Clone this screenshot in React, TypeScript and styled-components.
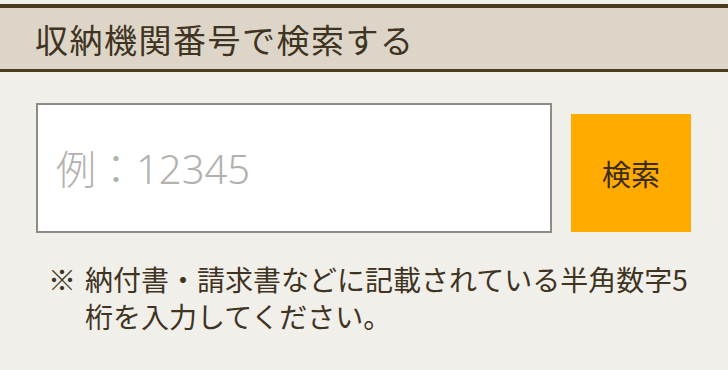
import { FC } from 'react'
import styled, { createGlobalStyle } from 'styled-components'

const GlobalStyle = createGlobalStyle`
    html, body {
        margin: 0;
        padding: 0;
        background: #f1efea;
    }
    body {
        font-family: "Noto Sans CJK JP", "Noto Sans", sans-serif;
        color: #3f3322;
    }
`

const Page = styled.div`
    width: 728px;
    height: 370px;
    padding-top: 4px;
    box-sizing: border-box;
    overflow: hidden;
`

const SectionHead = styled.h2`
    margin: 0;
    height: 61px;
    display: flex;
    align-items: center;
    padding-left: 35px;
    background: #ddd6c8;
    border-top: 4px solid #4b3b1e;
    border-bottom: 3px solid #4b3b1e;
    font-size: 33px;
    font-weight: 400;
    letter-spacing: 1.5px;
    color: #3f3322;
`

const SearchRow = styled.form`
    display: flex;
    align-items: flex-end;
    gap: 19px;
    margin: 31px 0 0 36px;
`

const CodeInput = styled.input`
    width: 516px;
    height: 130px;
    box-sizing: border-box;
    border: 2px solid #8f8b84;
    background: #fff;
    padding: 0 18px;
    font-family: "Noto Sans", "Noto Sans CJK JP", sans-serif;
    font-size: 40px;
    color: #3f3322;
    outline: none;

    &::placeholder {
        color: #b3b1ae;
        font-weight: 300;
    }
`

const SearchButton = styled.button`
    width: 120px;
    height: 118px;
    margin-bottom: 1px;
    border: none;
    background: #ffab00;
    font-family: "Noto Sans CJK JP", sans-serif;
    font-size: 29px;
    color: #3a2c14;
    cursor: pointer;
`

const Note = styled.div`
    display: flex;
    margin: 28px 0 0 48px;
    font-size: 28px;
    line-height: 37px;
    color: #3f3322;
`

const NoteMark = styled.span`
    flex: 0 0 37px;
`

const NoteText = styled.p`
    margin: 0;
    width: 628px;
`

const App: FC = () => {
    return <Page>
        <GlobalStyle />
        <SectionHead>収納機関番号で検索する</SectionHead>
        <SearchRow onSubmit={(e) => e.preventDefault()}>
            <CodeInput type="text" inputMode="numeric" placeholder="例：12345" />
            <SearchButton type="submit">検索</SearchButton>
        </SearchRow>
        <Note>
            <NoteMark>※</NoteMark>
            <NoteText>納付書・請求書などに記載されている半角数字5桁を入力してください。</NoteText>
        </Note>
    </Page>
}

export default App
